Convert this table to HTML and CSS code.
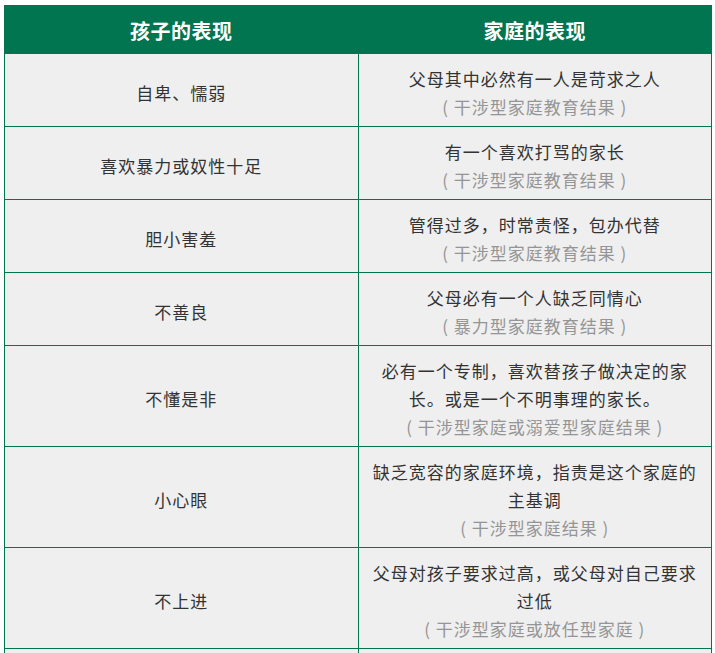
FILE: index.html
```html
<!DOCTYPE html>
<html lang="zh-CN">
<head>
<meta charset="utf-8">
<link rel="stylesheet" href="styles.css">
</head>
<body>
<div class="wrap">
<table class="tbl">
  <thead>
    <tr><th>孩子的表现</th><th>家庭的表现</th></tr>
  </thead>
  <tbody>
    <tr><td>自卑、懦弱</td><td>父母其中必然有一人是苛求之人<br><span class="note">( 干涉型家庭教育结果 )</span></td></tr>
    <tr><td>喜欢暴力或奴性十足</td><td>有一个喜欢打骂的家长<br><span class="note">( 干涉型家庭教育结果 )</span></td></tr>
    <tr><td>胆小害羞</td><td>管得过多，时常责怪，包办代替<br><span class="note">( 干涉型家庭教育结果 )</span></td></tr>
    <tr><td>不善良</td><td>父母必有一个人缺乏同情心<br><span class="note">( 暴力型家庭教育结果 )</span></td></tr>
    <tr><td>不懂是非</td><td>必有一个专制，喜欢替孩子做决定的家长。或是一个不明事理的家长。<br><span class="note">( 干涉型家庭或溺爱型家庭结果 )</span></td></tr>
    <tr><td>小心眼</td><td>缺乏宽容的家庭环境，指责是这个家庭的主基调<br><span class="note">( 干涉型家庭结果 )</span></td></tr>
    <tr><td>不上进</td><td>父母对孩子要求过高，或父母对自己要求过低<br><span class="note">( 干涉型家庭或放任型家庭 )</span></td></tr>
    <tr class="tail"><td></td><td></td></tr>
  </tbody>
</table>
</div>
</body>
</html>
```
FILE: styles.css
```css
html, body {
  margin: 0;
  padding: 0;
  background: #ffffff;
}
.wrap {
  padding: 5px 4px 0 4px;
}
.tbl {
  width: 708px;
  border-collapse: collapse;
  table-layout: fixed;
  font-family: "Noto Sans CJK SC", "Noto Sans", sans-serif;
}
.tbl th {
  background: #017550;
  color: #ffffff;
  font-size: 20px;
  font-weight: bold;
  letter-spacing: 0.5px;
  line-height: 28px;
  padding: 11px 8px 8px;
  border: 1px solid #017550;
  text-align: center;
}
.tbl td {
  background: #efefef;
  color: #333333;
  font-size: 17px;
  letter-spacing: 1px;
  line-height: 28px;
  padding: 11px 8px 5px;
  border: 1px solid #017550;
  text-align: center;
  vertical-align: middle;
}
.tbl .tail td {
  height: 40px;
}
.note {
  color: #959595;
}
```
